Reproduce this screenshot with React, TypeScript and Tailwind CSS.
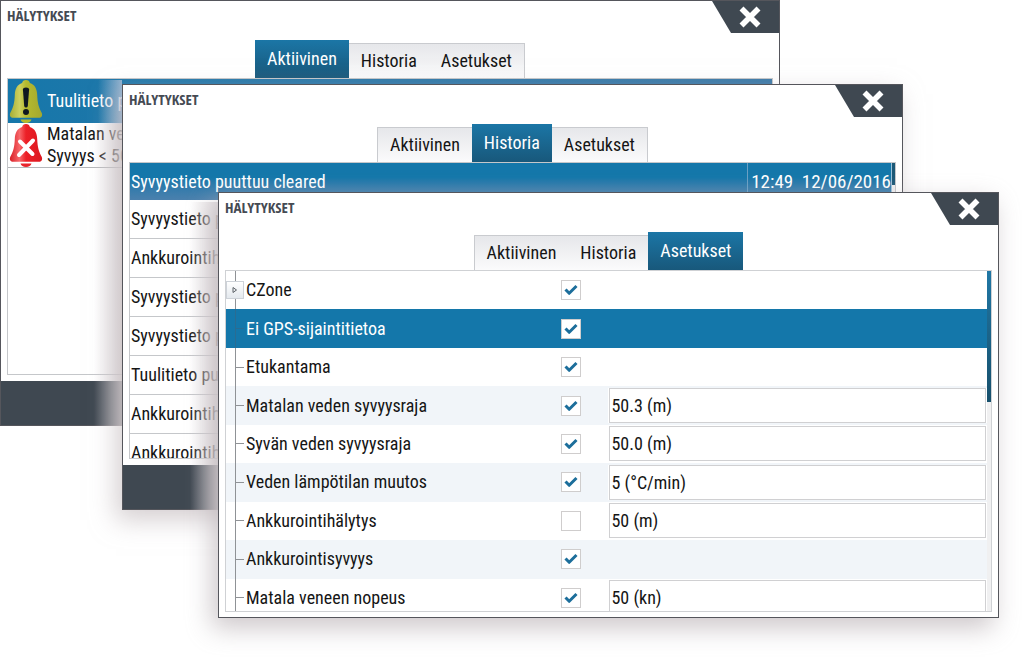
import type { ReactNode } from "react";

const TABS = ["Aktiivinen", "Historia", "Asetukset"];

type Setting = { name: string; checked: boolean; value?: string; expandable?: boolean };

const SETTINGS: Setting[] = [
  { name: "CZone", checked: true, expandable: true },
  { name: "Ei GPS-sijaintitietoa", checked: true },
  { name: "Etukantama", checked: true },
  { name: "Matalan veden syvyysraja", checked: true, value: "50.3 (m)" },
  { name: "Syvän veden syvyysraja", checked: true, value: "50.0 (m)" },
  { name: "Veden lämpötilan muutos", checked: true, value: "5 (°C/min)" },
  { name: "Ankkurointihälytys", checked: false, value: "50 (m)" },
  { name: "Ankkurointisyvyys", checked: true },
  { name: "Matala veneen nopeus", checked: true, value: "50 (kn)" },
];

const SELECTED_SETTING = 1;

const HISTORY = [
  "Syvyystieto puuttuu cleared",
  "Syvyystieto puuttuu",
  "Ankkurointihälytys",
  "Syvyystieto puuttuu",
  "Syvyystieto puuttuu",
  "Tuulitieto puuttuu",
  "Ankkurointihälytys",
  "Ankkurointihälytys",
];

function Tabs({ active }: { active: number }) {
  return (
    <div role="tablist" className="flex items-end justify-center">
      {TABS.map((tab, i) => (
        <button
          key={tab}
          type="button"
          role="tab"
          aria-selected={i === active}
          className={
            i === active
              ? "h-[38px] bg-linear-to-b from-[#1b76a6] to-[#18587b] px-3 text-white"
              : "h-[35px] border-t border-[#c9cbcf] bg-linear-to-b from-[#e6e7ea] to-[#fbfbfc] px-3 pb-px first:border-l last:border-r"
          }
        >
          {tab}
        </button>
      ))}
    </div>
  );
}

function AlarmWindow({
  place,
  active,
  footer,
  children,
}: {
  place: string;
  active: number;
  footer?: boolean;
  children: ReactNode;
}) {
  return (
    <section className={`absolute border border-[#55565c] bg-white ${place}`}>
      <header className="flex h-[33px] items-start justify-between">
        <h2 className="pt-1 pl-[6px] font-['Open_Sans_Condensed','Open_Sans',sans-serif] text-[15px] leading-5 font-bold text-[#454a53]">
          HÄLYTYKSET
        </h2>
        <button
          type="button"
          aria-label="Sulje"
          className="flex h-8 w-[67px] items-center justify-center bg-[#3f4851] pl-2 [clip-path:polygon(0_0,100%_0,100%_100%,19px_100%)]"
        >
          <svg viewBox="0 0 22 22" className="size-[22px]" aria-hidden="true">
            <path d="M2.5 2.5 19.5 19.5M19.5 2.5 2.5 19.5" stroke="#fff" strokeWidth="5.6" />
          </svg>
        </button>
      </header>
      <div className="pt-[6px]">
        <Tabs active={active} />
      </div>
      {children}
      {footer && <footer className="mt-[6px] h-11 bg-[#3f4851]" />}
    </section>
  );
}

function Bell({ kind }: { kind: "warning" | "critical" }) {
  const warning = kind === "warning";
  return (
    <svg viewBox="0 0 34 43" className="h-[43px] w-[34px] shrink-0" aria-hidden="true">
      <defs>
        <linearGradient id={kind} x1="0" x2="1">
          <stop offset="0" stopColor={warning ? "#a8ae35" : "#d81e26"} />
          <stop offset="0.3" stopColor={warning ? "#cdd05e" : "#f8676a"} />
          <stop offset="0.5" stopColor={warning ? "#b5ba2e" : "#ec2027"} />
          <stop offset="1" stopColor={warning ? "#a3a82f" : "#dc1820"} />
        </linearGradient>
      </defs>
      <path
        d="M17 0C14.8 0 13.5 1.3 13.1 3C8.2 4.500 6 9 5.800 15C5.500 23 4.300 27.500 1.200 33Q0 36.500 3 37.800H31Q34 36.500 32.800 33C29.700 27.500 28.500 23 28.200 15C28 9 25.800 4.500 20.900 3C20.500 1.300 19.200 0 17 0Z"
        fill={`url(#${kind})`}
      />
      <path d="M11.500 39.500H22.500C22 41.800 19.800 43 17 43S12 41.800 11.500 39.500Z" fill={warning ? "#b5ba2e" : "#e8252c"} />
      {warning ? (
        <g fill="#101820">
          <path d="M13.900 9.500Q14 7.500 17 7.500T20.100 9.500L18.800 26Q18.500 27.500 17 27.500T15.200 26Z" />
          <circle cx="17" cy="32" r="3" />
        </g>
      ) : (
        <path d="M11 17.500 23.500 30M24 16.500 10 31" stroke="#fff" strokeWidth="4" strokeLinecap="round" />
      )}
    </svg>
  );
}

/* Soft haze that the window in front throws over the left part of the one behind. */
function Haze({ place }: { place: string }) {
  return <div aria-hidden="true" className={`pointer-events-none absolute ${place}`} />;
}

function ActiveWindow() {
  return (
    <AlarmWindow place="top-0 left-0 right-[244px]" active={0} footer>
      <ul className="mx-[6px] h-[297px] border border-[#c5c7ca]">
        <li className="flex h-11 items-center gap-1 bg-linear-to-r from-[#1677aa] to-[#3a79a8] pl-px text-white">
          <Bell kind="warning" />
          <span>Tuulitieto puuttuu</span>
        </li>
        <li className="flex h-[45px] items-center gap-1 border-b border-[#b5b7ba] pl-px leading-[22px]">
          <Bell kind="critical" />
          <span>
            Matalan veden syvyysraja
            <br />
            Syvyys &lt; 50.3 m
          </span>
        </li>
      </ul>
    </AlarmWindow>
  );
}

function HistoryWindow() {
  return (
    <AlarmWindow
      place="top-[84px] left-[122px] right-[121px] shadow-[-6px_10px_24px_rgba(190,182,185,0.65)]"
      active={1}
      footer
    >
      <div className="mx-[6px] flex h-[297px] overflow-hidden border border-[#c5c7ca]">
        <div className="min-w-0 flex-1">
          <table className="h-[310px] w-full border-collapse">
            <tbody>
              {HISTORY.map((entry, i) => (
                <tr
                  key={i}
                  className={
                    i === 0
                      ? "bg-linear-to-b from-[#1477aa] from-40% to-[#4a80ad] text-white"
                      : "border-b border-[#c5c7ca]"
                  }
                >
                  <td className="p-0 pl-px">{entry}</td>
                  <td className="w-[142px] border-l border-[#6aa0c4] p-0 pl-[3px] text-[19px] whitespace-pre">
                    {i === 0 ? "12:49  12/06/2016" : ""}
                  </td>
                </tr>
              ))}
            </tbody>
          </table>
        </div>
        <div className="w-1 border-l border-[#9cc3da] bg-[#f0f0f1]">
          <div className="h-[22px] bg-[#1b5877]" />
        </div>
      </div>
    </AlarmWindow>
  );
}

function CheckBox({ label, checked }: { label: string; checked: boolean }) {
  return (
    <label className="grid size-5 place-items-center">
      <input
        type="checkbox"
        aria-label={label}
        defaultChecked={checked}
        className="peer col-start-1 row-start-1 size-5 appearance-none border border-[#cfcdcd] bg-white"
      />
      <svg
        viewBox="0 0 14 12"
        className="pointer-events-none invisible col-start-1 row-start-1 h-3 w-3.5 peer-checked:visible"
        aria-hidden="true"
      >
        <path d="M1.500 5.500 5.200 9.300 12.500 2" fill="none" stroke="#1c6e9b" strokeWidth="3" strokeLinejoin="round" />
      </svg>
    </label>
  );
}

function TreeMark({ expandable, selected }: { expandable?: boolean; selected: boolean }) {
  return (
    <span className="grid w-[19px] shrink-0 grid-cols-1 items-center self-stretch">
      <span
        className={`col-start-1 row-start-1 ml-[9px] w-px self-stretch ${selected ? "bg-[#2a6c92]" : "bg-[#8f9296]"}`}
      />
      {expandable ? (
        <button
          type="button"
          aria-label="Laajenna"
          className="col-start-1 row-start-1 flex size-[18px] items-center justify-center border border-[#cdd2d8] bg-linear-to-b from-white to-[#e4e9ee]"
        >
          <svg viewBox="0 0 6 8" className="h-2 w-1.5" aria-hidden="true">
            <path d="M1 1.500 4.500 4 1 6.500Z" fill="none" stroke="#5b6066" />
          </svg>
        </button>
      ) : (
        <span
          className={`col-start-1 row-start-1 ml-[9px] h-px w-[9px] ${selected ? "bg-[#2a6c92]" : "bg-[#8f9296]"}`}
        />
      )}
    </span>
  );
}

function SettingsWindow() {
  return (
    <AlarmWindow
      place="top-[192px] left-[218px] right-[25px] pb-[5px] shadow-[-6px_10px_24px_rgba(190,182,185,0.75)]"
      active={2}
    >
      <div className="mx-[6px] flex h-[342px] overflow-hidden border border-[#cfd1d4]">
        <div className="min-w-0 flex-1">
          <table className="h-[346px] w-full table-fixed border-collapse">
            <colgroup>
              <col className="w-[44%]" />
              <col className="w-[6%]" />
              <col />
            </colgroup>
            <tbody>
              {SETTINGS.map((row, i) => {
                const selected = i === SELECTED_SETTING;
                return (
                  <tr
                    key={row.name}
                    className={selected ? "bg-[#1477aa] text-white" : i % 2 === 1 ? "bg-[#f1f5f9]" : "bg-white"}
                  >
                    <td className="h-[38px] p-0">
                      <div className="flex h-full items-center gap-px">
                        <TreeMark expandable={row.expandable} selected={selected} />
                        <span>{row.name}</span>
                      </div>
                    </td>
                    <td className="p-0">
                      <CheckBox label={row.name} checked={row.checked} />
                    </td>
                    <td className="p-0">
                      {row.value && (
                        <div className="ml-0.5 bg-white px-px">
                          <input
                            type="text"
                            aria-label={`${row.name}, raja-arvo`}
                            defaultValue={row.value}
                            className="block h-[35px] w-full border border-[#d0d0d2] bg-white px-px"
                          />
                        </div>
                      )}
                    </td>
                  </tr>
                );
              })}
            </tbody>
          </table>
        </div>
        <div className="w-1 bg-[#f0f0f1]">
          <div className="h-[131px] bg-linear-to-b from-[#2077a5] to-[#17506c]" />
        </div>
      </div>
    </AlarmWindow>
  );
}

export default function App() {
  return (
    <main className="relative min-h-screen overflow-hidden bg-white font-['Roboto_Condensed','Noto_Sans',sans-serif] text-[18px] leading-6 text-[#151515]">
      <ActiveWindow />
      <Haze place="top-[124px] left-[94px] h-[302px] w-7 bg-linear-to-r from-white/0 to-[#d8d2d5]/75" />
      <Haze place="top-[80px] left-[98px] h-11 w-6 bg-linear-to-r from-white/0 to-[#c4cbe0]/70" />
      <HistoryWindow />
      <Haze place="top-[202px] left-[190px] h-[308px] w-7 bg-linear-to-r from-white/0 to-[#d8d2d5]/80" />
      <SettingsWindow />
    </main>
  );
}
